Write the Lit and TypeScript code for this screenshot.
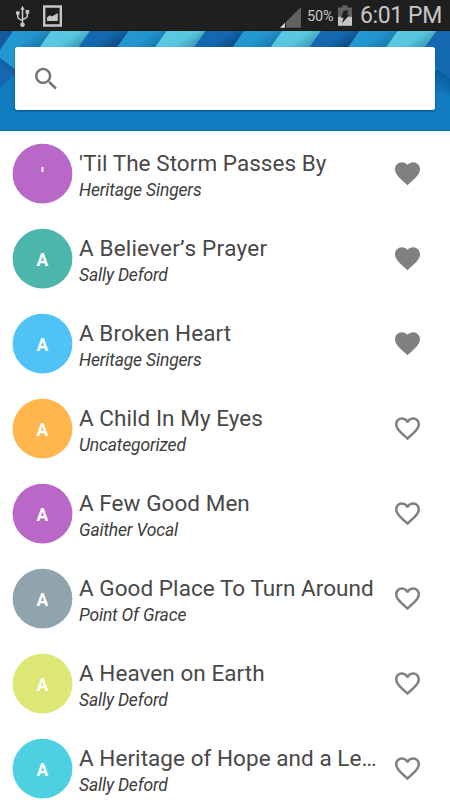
import { LitElement, html, css, svg } from "lit";
import { customElement, property } from "lit/decorators.js";
import { classMap } from "lit/directives/class-map.js";

interface Song {
  title: string;
  artist: string;
  color: string;
  favorite: boolean;
}

const SONGS: Song[] = [
  { title: "'Til The Storm Passes By", artist: "Heritage Singers", color: "#ba68c8", favorite: true },
  { title: "A Believer’s Prayer", artist: "Sally Deford", color: "#4db6ac", favorite: true },
  { title: "A Broken Heart", artist: "Heritage Singers", color: "#4fc3f7", favorite: true },
  { title: "A Child In My Eyes", artist: "Uncategorized", color: "#ffb74d", favorite: false },
  { title: "A Few Good Men", artist: "Gaither Vocal", color: "#ba68c8", favorite: false },
  { title: "A Good Place To Turn Around", artist: "Point Of Grace", color: "#90a4ae", favorite: false },
  { title: "A Heaven on Earth", artist: "Sally Deford", color: "#dce775", favorite: false },
  { title: "A Heritage of Hope and a Le…", artist: "Sally Deford", color: "#4dd0e1", favorite: false },
];

const HEART =
  "M12 21.35l-1.45-1.32C5.4 15.36 2 12.28 2 8.5 2 5.42 4.42 3 7.5 3c1.74 0 3.41.81 4.5 2.09C13.09 3.81 14.76 3 16.5 3 19.58 3 22 5.42 22 8.5c0 3.78-3.4 6.86-8.55 11.54L12 21.35z";
const HEART_OUTLINE =
  "M16.5 3c-1.74 0-3.41.81-4.5 2.09C10.91 3.81 9.24 3 7.5 3 4.42 3 2 5.42 2 8.5c0 3.78 3.4 6.86 8.55 11.54L12 21.35l1.45-1.32C18.6 15.36 22 12.28 22 8.5 22 5.42 19.58 3 16.5 3zm-4.4 15.55l-.1.1-.1-.1C7.14 14.24 4 11.39 4 8.5 4 6.5 5.5 5 7.5 5c1.54 0 3.04.99 3.57 2.36h1.87C13.46 5.99 14.96 5 16.5 5c2 0 3.5 1.5 3.5 3.5 0 2.89-3.14 5.74-7.9 10.05z";

@customElement("status-bar")
class StatusBar extends LitElement {
  static styles = css`
    :host {
      display: flex;
      align-items: flex-start;
      height: 31px;
      box-sizing: border-box;
      background: #1f1f1f;
      border-bottom: 1px solid #191614;
      color: #c6c6c6;
      font-family: Roboto, sans-serif;
      white-space: nowrap;
    }
    svg { display: block; flex: none; }
    .usb { margin: 5px 0 0 15px; }
    .photo { margin: 5px 0 0 13px; }
    .signal { margin: 7px 0 0 auto; }
    .percent { margin: 7px 0 0 6px; width: 27px; font-size: 14.5px; line-height: 20px; letter-spacing: -0.2px; }
    .battery { margin: 5px 0 0 4px; }
    .time { margin: 2px 0 0 8px; width: 90px; font-size: 23px; line-height: 28px; letter-spacing: -0.4px; }
  `;

  render() {
    return html`
      <svg class="usb" width="15" height="23" viewBox="0 0 15 23">
        <g fill="none" stroke="#c6c6c6" stroke-width="1.5">
          <path d="M7.5 3v17M2.7 8v3.6q0 1.6 1.5 2.3l3.3 1.7M12.3 8v2.8q0 1.5-1.4 2.2L7.5 14.7" />
        </g>
        <path fill="#c6c6c6" d="M7.5.8l2.2 4H5.3zM10.6 5h3.6v3.7h-3.6z" />
        <circle cx="2.8" cy="8" r="2" fill="#c6c6c6" />
        <circle cx="7.5" cy="19.7" r="2.3" fill="#c6c6c6" />
      </svg>
      <svg class="photo" width="19" height="22" viewBox="0 0 19 22">
        <path fill="#c6c6c6" fill-rule="evenodd" d="M0 .3h19v21.5H0zM2.4 2.8v16.5h14.2V2.8z" />
        <path fill="#c6c6c6" d="M4 16v-3.6l2.7-2.2 2.2 1.4L14.8 8v8z" />
      </svg>
      <svg class="signal" width="21" height="21" viewBox="0 0 21 21">
        <path fill="#616161" d="M21 0v20.8H0z" />
        <path fill="#1f1f1f" d="M5 14h1v7H5z" />
        <path fill="#d4d4d4" d="M5 15.8v5H0z" />
      </svg>
      <span class="percent">50%</span>
      <svg class="battery" width="14" height="21" viewBox="0 0 14 21">
        <path fill="#616161" d="M4.5.3h5v2.2H14V13H0V2.5h4.5z" />
        <path fill="#c6c6c6" d="M0 11.8h14v9H0z" />
        <path fill="#1f1f1f" d="M5.8 5.5h5L8.7 9.8h2.9L3.8 18.6l1.8-5.8H2.9z" />
      </svg>
      <span class="time">6:01 PM</span>
    `;
  }
}

@customElement("search-header")
class SearchHeader extends LitElement {
  static styles = css`
    :host {
      display: grid;
      height: 100px;
      background: #107bbf;
      box-sizing: border-box;
      overflow: hidden;
    }
    .pattern, .box { grid-area: 1 / 1; }
    .pattern { display: block; }
    .box {
      z-index: 1;
      display: flex;
      align-items: center;
      height: 63px;
      margin: 16px 15px 0;
      padding-left: 16px;
      box-sizing: border-box;
      background: #fff;
      border-radius: 2.5px;
      box-shadow: 0 1px 2px rgba(0, 35, 80, 0.5);
    }
    .box svg { fill: #757575; }
  `;

  render() {
    const period = 115.5;
    return html`
      <svg class="pattern" width="450" height="100" viewBox="0 0 450 100">
        <defs>
          <linearGradient id="mid" x1="0" y1="0" x2=".9" y2=".5">
            <stop offset="0" stop-color="#249ad3" /><stop offset=".65" stop-color="#2295cf" /><stop offset="1" stop-color="#1a7bae" />
          </linearGradient>
          <linearGradient id="light" x1="0" y1="0" x2=".9" y2=".5">
            <stop offset="0" stop-color="#5bcde5" /><stop offset=".7" stop-color="#57c5de" /><stop offset="1" stop-color="#409eb9" />
          </linearGradient>
          <linearGradient id="deep" x1="0" y1="0" x2=".9" y2=".5">
            <stop offset="0" stop-color="#1569b3" /><stop offset=".65" stop-color="#1467af" /><stop offset="1" stop-color="#0e4b85" />
          </linearGradient>
          <linearGradient id="fall" x1=".8" y1="0" x2=".3" y2="1">
            <stop offset="0" stop-color="#0d4c8c" /><stop offset=".55" stop-color="#1569b3" /><stop offset="1" stop-color="#1268b0" />
          </linearGradient>
          <linearGradient id="shade" x1=".6" y1="0" x2=".3" y2="1">
            <stop offset="0" stop-color="#075492" /><stop offset="1" stop-color="#107bbf" />
          </linearGradient>
        </defs>
        ${[0, 1, 2, 3].map((i) => {
          const x = 13 + i * period;
          return svg`
            <path fill="url(#mid)" d="M${x} 0h38l-14 20h-38z" />
            <path fill="url(#light)" d="M${x + 38} 0h39l-14 20h-39z" />
            <path fill="url(#deep)" d="M${x + 77} 0h38.5l-14 20h-38.5z" />`;
        })}
        <path fill="url(#fall)" d="M0 26L16 38v5L0 56z" />
        <path fill="#2298d2" d="M13 0h7v39h-4L0 27V19z" />
        <path fill="#145b9d" d="M0 0h13L0 19z" />
        <path fill="#1569b0" d="M437 0h13v48l-15-11V3z" />
        <path fill="url(#shade)" d="M435 38h2l13 10v16l-15-6z" />
        <path fill="#1b9db0" d="M435 36l2 1.5-2 3z" />
        <path fill="#046fb5" d="M0 99h450v1H0z" />
      </svg>
      <div class="box">
        <svg width="30" height="30" viewBox="0 0 24 24">
          <path transform="translate(.25 0)" d="M15.5 14h-.79l-.28-.27C15.41 12.59 16 11.11 16 9.5 16 5.91 13.09 3 9.5 3S3 5.91 3 9.5 5.91 16 9.5 16c1.61 0 3.09-.59 4.23-1.57l.27.28v.79l5 4.99L20.49 19l-4.99-5zm-6 0C7.01 14 5 11.99 5 9.5S7.01 5 9.5 5 14 7.01 14 9.5 11.99 14 9.5 14z" />
        </svg>
      </div>
    `;
  }
}

@customElement("song-row")
class SongRow extends LitElement {
  @property({ attribute: false }) song!: Song;

  static styles = css`
    :host {
      display: flex;
      align-items: flex-start;
      height: 85px;
      padding: 0 27px 0 12px;
      box-sizing: border-box;
      font-family: Roboto, sans-serif;
    }
    .avatar { flex: none; display: block; margin-top: 12px; }
    .avatar text { fill: #fff; font-size: 17.5px; font-weight: 700; text-anchor: middle; }
    .text { flex: none; width: 300px; margin: 18px 0 0 6px; }
    .title, .artist { white-space: nowrap; }
    .title { font-size: 22.5px; line-height: 28px; letter-spacing: 0.05px; color: #484848; }
    .title.possessive { font-kerning: none; letter-spacing: 0.14px; }
    .artist { font-size: 17.5px; line-height: 27px; letter-spacing: -0.17px; font-style: italic; color: #3c3c3c; }
    .heart { flex: none; margin: 27px 0 0 auto; fill: #808080; }
  `;

  render() {
    const s = this.song;
    return html`
      <svg class="avatar" width="61" height="61" viewBox="0 0 61 61">
        <circle cx="30.5" cy="30.7" r="29.9" fill=${s.color} />
        <text x="30.5" y="38">${s.title[0]}</text>
      </svg>
      <div class="text">
        <div class=${classMap({ title: true, possessive: s.title.includes("’") })}>${s.title}</div>
        <div class="artist">${s.artist}</div>
      </div>
      <svg class="heart" width="31" height="31" viewBox="0 0 31 31">
        <path transform="translate(.5 .5) scale(1.25)" d=${s.favorite ? HEART : HEART_OUTLINE} />
      </svg>
    `;
  }
}

@customElement("app-root")
class AppRoot extends LitElement {
  static styles = css`
    :host {
      display: flex;
      flex-direction: column;
      width: 450px;
      height: 800px;
      overflow: hidden;
      background: #fff;
    }
    status-bar, search-header, song-row { flex: none; }
  `;

  render() {
    return html`
      <status-bar></status-bar>
      <search-header></search-header>
      ${SONGS.map((s) => html`<song-row .song=${s}></song-row>`)}
    `;
  }
}
